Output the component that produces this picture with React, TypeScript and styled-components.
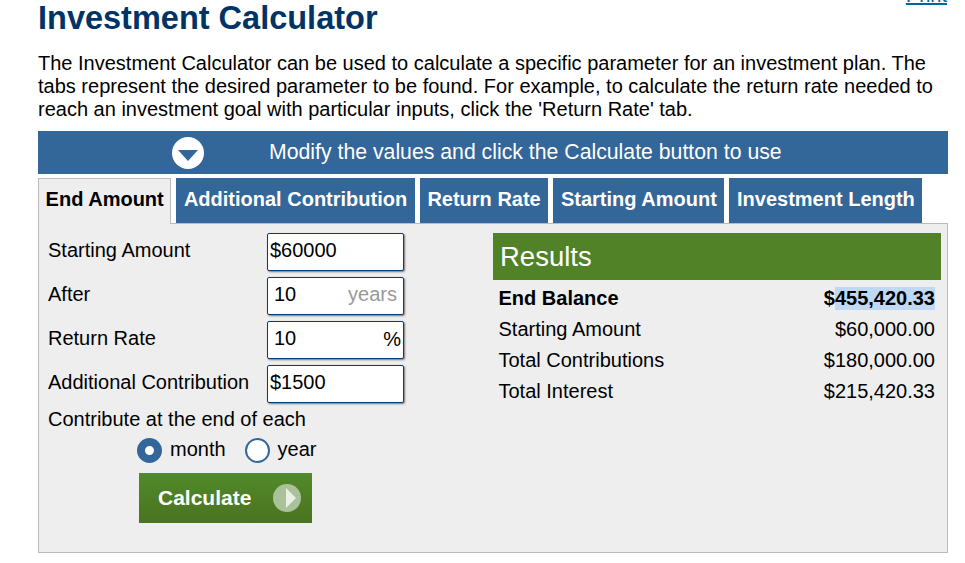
import { createGlobalStyle, styled } from "styled-components";

const GlobalStyle = createGlobalStyle`
    html, body {
        margin: 0;
        padding: 0;
        background: #fff;
        overflow: hidden;
        height: 100%;
    }
    body {
        font-family: "Liberation Sans", Arial, sans-serif;
        font-size: 20px;
        color: #000;
    }
`

const Page = styled.div`
    width: 910px;
    margin: -8px 0 0 38px;
`

const Header = styled.header`
    display: flex;
    justify-content: space-between;
    align-items: flex-start;
    height: 60px;
`

const Title = styled.h1`
    margin: 0;
    padding-top: 7px;
    font-size: 32.5px;
    line-height: 38px;
    font-weight: 700;
    color: #003366;
`

const PrintLink = styled.a`
    font-size: 20px;
    line-height: 20px;
    margin: -7px 1px 0 0;
    color: #006699;
    text-decoration: underline;
`

const Intro = styled.p`
    margin: 0 0 10px;
    line-height: 23px;
    width: 905px;
`

const Banner = styled.div`
    display: flex;
    align-items: center;
    height: 43px;
    padding-left: 134px;
    gap: 65px;
    background: #336699;
    color: #fff;
    font-size: 21.25px;
`

const Tabs = styled.div`
    display: flex;
    gap: 5px;
    margin-top: 4px;
    height: 45px;
`

const Tab = styled.div<{ $active?: boolean }>`
    display: flex;
    align-items: center;
    padding: 0 7.6px 2px;
    font-weight: 700;
    white-space: nowrap;
    color: ${props => props.$active ? "#000" : "#fff"};
    background: ${props => props.$active ? "#eeeeee" : "#336699"};
    ${props => props.$active ? `
        box-sizing: border-box;
        border: 1px solid #bbbbbb;
        border-bottom: none;
        padding: 0 6.6px 4px;
        height: 46px;
        position: relative;
        z-index: 1;
    ` : ""}
`

const Panel = styled.div`
    display: flex;
    justify-content: space-between;
    box-sizing: border-box;
    height: 330px;
    padding: 9px 6px 0 9px;
    background: #eeeeee;
    border: 1px solid #bbbbbb;
`

const FormColumn = styled.div`
    display: flex;
    flex-direction: column;
    width: 356px;
`

const FormRow = styled.div`
    display: grid;
    grid-template-columns: 219px 137px;
    align-items: center;
    height: 38px;
    margin-bottom: 6px;
`

const FieldLabel = styled.label`
    padding-bottom: 4px;
`

const InputWrap = styled.div`
    position: relative;
    height: 38px;
`

const TextInput = styled.input<{ $plain?: boolean }>`
    box-sizing: border-box;
    width: 137px;
    height: 38px;
    margin: 0;
    padding: 0 0 4px ${props => props.$plain ? "2px" : "6px"};
    font-family: inherit;
    font-size: 20px;
    color: #000;
    background: #fff;
    border: 1px solid #003f7f;
    border-radius: 2px;
    box-shadow: 1px 1px 2px #777;
    outline: none;
`

const Suffix = styled.span<{ $muted?: boolean }>`
    position: absolute;
    top: ${props => props.$muted ? "6px" : "7px"};
    right: ${props => props.$muted ? "7px" : "3px"};
    line-height: 23px;
    color: ${props => props.$muted ? "#999" : "#000"};
`

const ContributeLabel = styled.div`
    line-height: 23px;
    margin-top: -1px;
`

const RadioRow = styled.div`
    display: flex;
    align-items: center;
    height: 25px;
    margin: 7px 0 10px 89px;
`

const Radio = styled.span<{ $checked?: boolean }>`
    box-sizing: border-box;
    width: 25px;
    height: 25px;
    border-radius: 50%;
    background: #fff;
    border: ${props => props.$checked ? "8px" : "2px"} solid #336699;
`

const RadioText = styled.span`
    margin: 0 19px 0 8px;
    padding-bottom: 2px;
`

const CalculateButton = styled.button`
    display: flex;
    align-items: center;
    box-sizing: border-box;
    width: 173px;
    height: 50px;
    margin-left: 91px;
    padding: 0 0 0 19px;
    border: none;
    background: linear-gradient(#518a2a, #4a7320);
    color: #fff;
    font-family: inherit;
    font-size: 21px;
    font-weight: 700;
`

const ButtonIcon = styled.svg`
    width: 28px;
    height: 28px;
    margin-left: 22px;
`

const Results = styled.section`
    width: 448px;
`

const ResultsTitle = styled.h2`
    box-sizing: border-box;
    height: 47px;
    margin: 0 0 3px;
    padding-left: 7px;
    background: #518228;
    color: #fff;
    font-size: 27.5px;
    font-weight: 400;
    line-height: 47px;
`

const ResultRow = styled.div<{ $bold?: boolean }>`
    display: flex;
    justify-content: space-between;
    align-items: center;
    height: 31px;
    padding: 0 6px 0 5.5px;
    font-weight: ${props => props.$bold ? 700 : 400};
`

const Selected = styled.span`
    display: inline-block;
    line-height: 23px;
    background: #bfd9f5;
`

const results = [
    { label: "Starting Amount", value: "$60,000.00" },
    { label: "Total Contributions", value: "$180,000.00" },
    { label: "Total Interest", value: "$215,420.33" },
]

export default function App() {
    return (
        <Page>
            <GlobalStyle />
            <Header>
                <Title>Investment Calculator</Title>
                <PrintLink>Print</PrintLink>
            </Header>
            <Intro>
                The Investment Calculator can be used to calculate a specific parameter for an investment plan. The tabs represent the desired parameter to be found. For example, to calculate the return rate needed to reach an investment goal with particular inputs, click the 'Return Rate' tab.
            </Intro>
            <Banner>
                <svg width="32" height="32" viewBox="0 0 32 32">
                    <circle cx="16" cy="16" r="16" fill="#fff" />
                    <path d="M6 13h20L16 24z" fill="#336699" />
                </svg>
                <span>Modify the values and click the Calculate button to use</span>
            </Banner>
            <Tabs>
                <Tab $active>End Amount</Tab>
                <Tab>Additional Contribution</Tab>
                <Tab>Return Rate</Tab>
                <Tab>Starting Amount</Tab>
                <Tab>Investment Length</Tab>
            </Tabs>
            <Panel>
                <FormColumn>
                    <FormRow>
                        <FieldLabel>Starting Amount</FieldLabel>
                        <InputWrap><TextInput $plain readOnly value="$60000" /></InputWrap>
                    </FormRow>
                    <FormRow>
                        <FieldLabel>After</FieldLabel>
                        <InputWrap>
                            <TextInput readOnly value="10" />
                            <Suffix $muted>years</Suffix>
                        </InputWrap>
                    </FormRow>
                    <FormRow>
                        <FieldLabel>Return Rate</FieldLabel>
                        <InputWrap>
                            <TextInput readOnly value="10" />
                            <Suffix>%</Suffix>
                        </InputWrap>
                    </FormRow>
                    <FormRow>
                        <FieldLabel>Additional Contribution</FieldLabel>
                        <InputWrap><TextInput $plain readOnly value="$1500" /></InputWrap>
                    </FormRow>
                    <ContributeLabel>Contribute at the end of each</ContributeLabel>
                    <RadioRow>
                        <Radio $checked />
                        <RadioText>month</RadioText>
                        <Radio />
                        <RadioText>year</RadioText>
                    </RadioRow>
                    <CalculateButton>
                        Calculate
                        <ButtonIcon viewBox="0 0 28 28">
                            <circle cx="14" cy="14" r="14" fill="#a9c29a" />
                            <path d="M13 4l10 10-10 10z" fill="#eaf0e5" />
                        </ButtonIcon>
                    </CalculateButton>
                </FormColumn>
                <Results>
                    <ResultsTitle>Results</ResultsTitle>
                    <ResultRow $bold>
                        <span>End Balance</span>
                        <span>$<Selected>455,420.33</Selected></span>
                    </ResultRow>
                    {results.map(item => (
                        <ResultRow key={item.label}>
                            <span>{item.label}</span>
                            <span>{item.value}</span>
                        </ResultRow>
                    ))}
                </Results>
            </Panel>
        </Page>
    )
}
